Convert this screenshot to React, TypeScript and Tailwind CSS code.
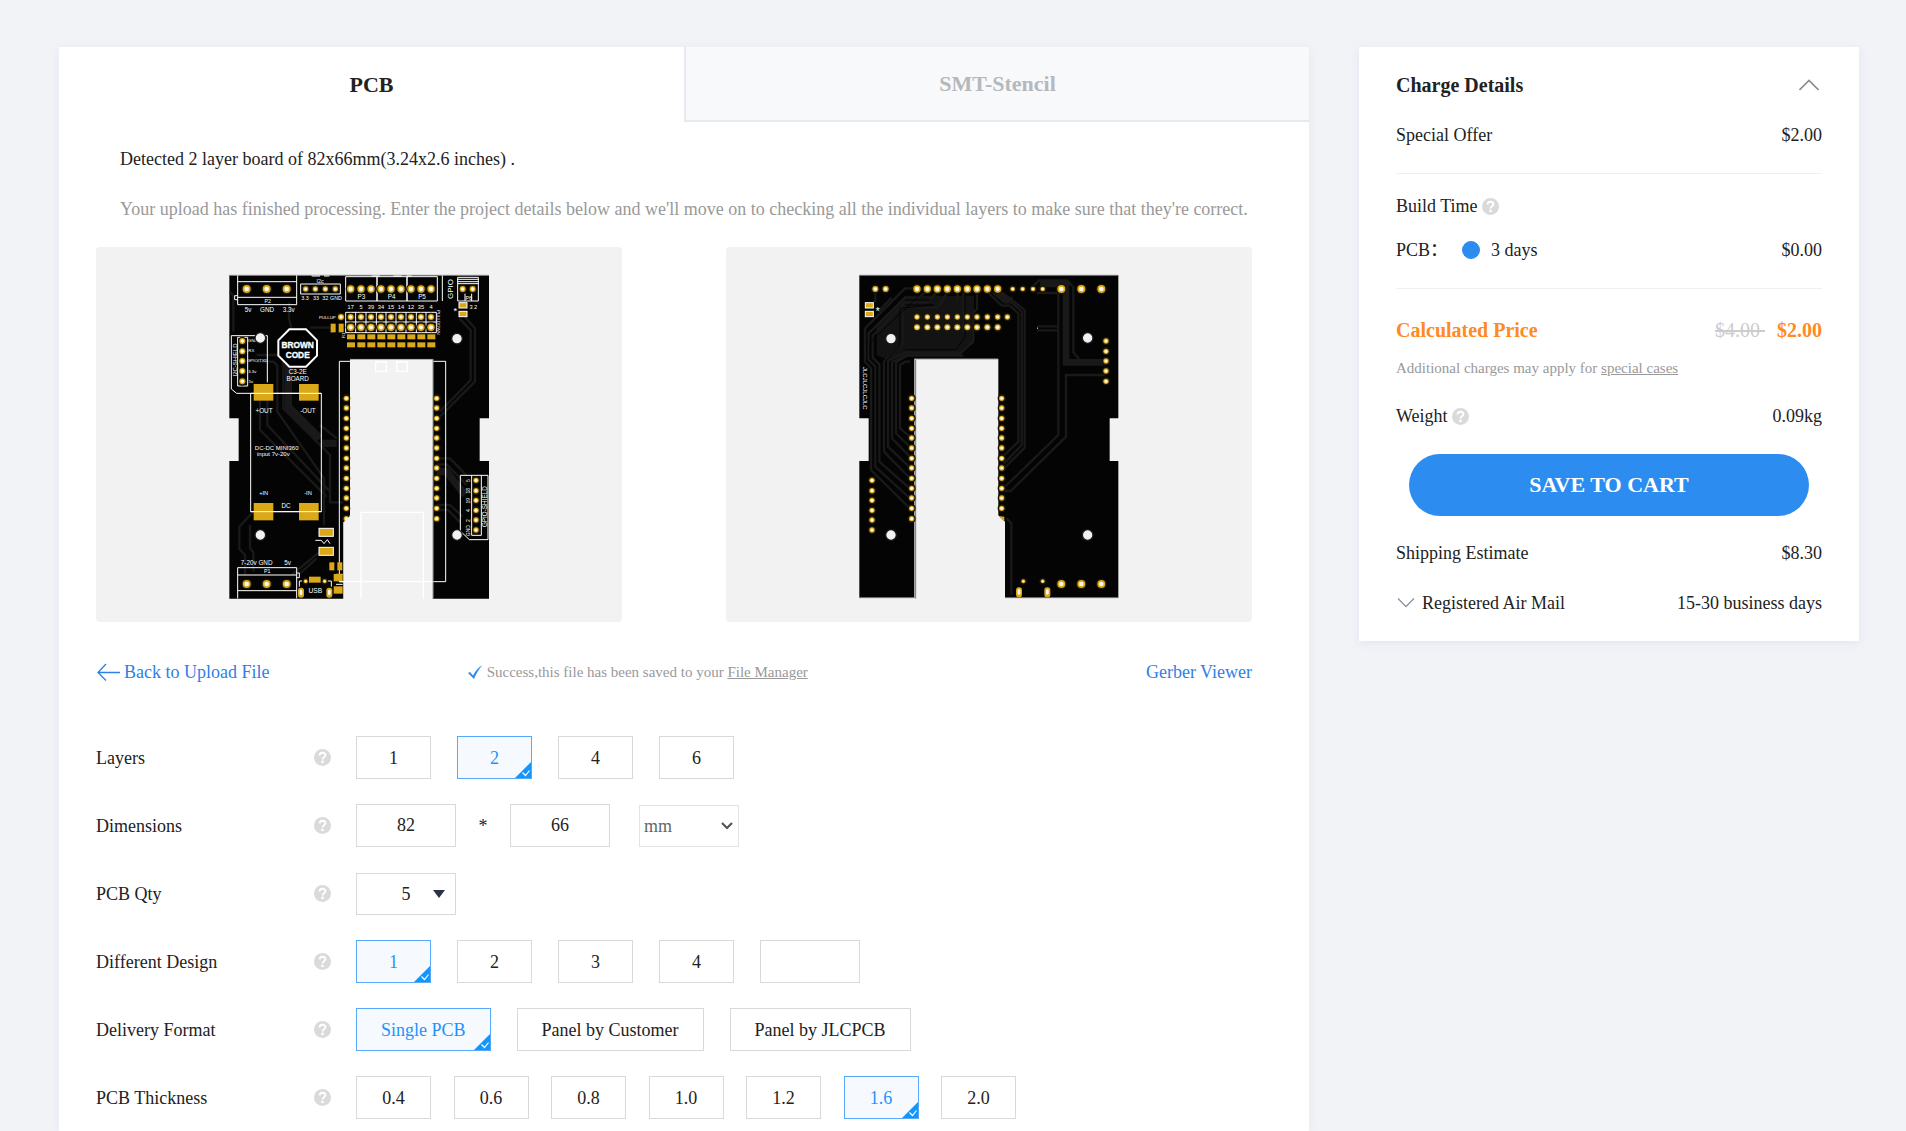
import { useState, type ReactNode } from "react";

const GOLD = "#dba818";
const TRACE = "#191919";
const PAPER = "#f2f2f2";

type Point = [number, number];

/** Plated holes: a gold ring with a light drill hole. */
function Pads({ at, r }: { at: Point[]; r: number }) {
  return (
    <g>
      {at.map(([x, y]) => (
        <g key={`${x}-${y}`}>
          <circle cx={x} cy={y} r={r + 4} fill="#1c1808" />
          <circle cx={x} cy={y} r={r} fill={GOLD} />
          <circle cx={x} cy={y} r={r * 0.58} fill="#fff8e8" />
        </g>
      ))}
    </g>
  );
}

function Holes({ at }: { at: Point[] }) {
  return (
    <g>
      {at.map(([x, y]) => (
        <circle key={`${x}-${y}`} cx={x} cy={y} r={16} fill={PAPER} stroke="#1a1a1a" strokeWidth={4} />
      ))}
    </g>
  );
}

function Blocks({ at, w, h }: { at: Point[]; w: number; h: number }) {
  return (
    <g fill={GOLD}>
      {at.map(([x, y]) => (
        <rect key={`${x}-${y}`} x={x} y={y} width={w} height={h} />
      ))}
    </g>
  );
}

const row = (xs: number[], y: number): Point[] => xs.map((x) => [x, y]);
const column = (x: number, ys: number[]): Point[] => ys.map((y) => [x, y]);

const SIDE_YS = [400, 429, 460, 490, 519, 549, 580, 609, 640, 670, 699, 730];
const HEADER_XS = [392, 423, 453, 483, 513, 543, 573, 603, 633];

function FrontBoard() {
  return (
    <svg viewBox="0 0 840 1020" className="h-[340px] w-[280px]" role="img" aria-label="Board, top side">
      <path
        d="M28 31H807V460H779V588H807V1001H638V283H390V751L370 772V1001H28V588H56V460H28Z"
        fill="#040404"
      />
      <g fill="none" stroke={TRACE} strokeWidth={7} strokeLinejoin="round">
        <path d="M207 112V160L215 195M270 188H335V205M40 200V92L30 80" />
        <path d="M110 270H175L190 285V430L330 570V712H370M110 290H160L172 302V440L312 640V780" />
        <path d="M120 408V495L320 695M142 408V480L330 680M300 480L350 520" />
        <path d="M730 150L765 190V350L660 455M718 160L752 196V345L660 440" />
        <path d="M98 742L58 785V852L75 870V930M90 780V850L100 862V920M300 860L215 930M290 880L240 925" />
        <path d="M650 580H690L740 632M650 598H680L740 660M650 720H690L728 755M650 735H684L720 772" />
      </g>
      <g stroke={TRACE} strokeWidth={22} fill="none">
        <path d="M205 300V425L300 520M305 535H350M650 620H680L735 690" />
      </g>

      <g fill="none" stroke="#fff" strokeWidth={3}>
        <path d="M28 31H807" stroke="#8a8a8a" />
        <path d="M53 31V119H230V31M53 50H230M53 97H230M53 92H44V104H53" />
        <path d="M242 57H361V87H242ZM275 33H300M312 33H328M455 33H480M520 33H545M560 33H575" />
        <path d="M377 35H471V108H377ZM471 35H561V108H471ZM561 35H652V108H561ZM667 31V108" />
        <path d="M713 37H775V108H713ZM713 43H775M713 50H775M713 56H775M735 86V108M755 86V108" />
        <path d="M377 142H649V203H377ZM407 142V203M438 142V203M469 142V203M498 142V203M528 142V203M558 142V203M589 142V203M618 142V203M377 171H649" />
        <path d="M34 212V372L50 385H304V740H92V385M34 212H142V352M53 217H83V363H53Z" />
        <path d="M677 950V289H358V950H677" />
        <path d="M721 631H804V824H748L721 798V631M755 631V811H784V631" />
        <path d="M53 1000V908H230V1000M53 930H230M53 977H230M230 924H238V938H230" />
        <path d="M238 965V948H246M334 965V948H324M348 928H368M348 958H368" />
        <path d="M286 826H304L312 836L322 824L330 836" />
      </g>
      <path d="M638 283V1001" stroke="#777" strokeWidth={3} />
      <path d="M208 193H258L291 226V272L258 305H208L175 272V226Z" fill="#000" stroke="#fff" strokeWidth={6} />

      <g fill="#fff" fontFamily="Liberation Sans, sans-serif" fontSize={19} textAnchor="middle">
        <text x={233} y={249} fontSize={25} fontWeight={700} stroke="#fff">BROWN</text>
        <text x={233} y={278} fontSize={25} fontWeight={700} stroke="#fff">CODE</text>
        <text x={233} y={326}>C3-2E</text>
        <text x={233} y={349}>BOARD</text>
        <text x={84} y={141}>5v</text>
        <text x={141} y={141}>GND</text>
        <text x={206} y={141}>3.3v</text>
        <text x={143} y={113} fontSize={16}>P2</text>
        <text x={300} y={54} fontSize={16}>I2c</text>
        <text x={255} y={104} fontSize={16}>3.3</text>
        <text x={288} y={104} fontSize={16}>33</text>
        <text x={316} y={104} fontSize={16}>32</text>
        <text x={348} y={104} fontSize={16}>GND</text>
        <text x={424} y={101}>P3</text>
        <text x={515} y={101}>P4</text>
        <text x={606} y={101}>P5</text>
        <text x={746} y={106} fontSize={16}>P6</text>
        {["17", "5", "39", "34", "15", "14", "12", "35", "4"].map((t, i) => (
          <text key={t} x={HEADER_XS[i]} y={131} fontSize={17}>{t}</text>
        ))}
        <text x={760} y={131} fontSize={17}>3 2</text>
        <text x={706} y={148} fontSize={28}>*</text>
        <text x={322} y={161} fontSize={13}>PULLUP</text>
        <text x={98} y={232} fontSize={13}>GND</text>
        <text x={94} y={262} fontSize={13}>RX</text>
        <text x={112} y={291} fontSize={13}>GPIO/TXD</text>
        <text x={97} y={323} fontSize={13}>3.3v</text>
        <text x={93} y={353} fontSize={13}>5v</text>
        <text x={132} y={445}>+OUT</text>
        <text x={264} y={445}>-OUT</text>
        <text x={170} y={555} fontSize={18}>DC-DC MINI360</text>
        <text x={160} y={572} fontSize={18}>input 7v-20v</text>
        <text x={131} y={691} fontSize={17}>+IN</text>
        <text x={264} y={691} fontSize={17}>-IN</text>
        <text x={198} y={730}>DC</text>
        <text x={110} y={901} fontSize={19}>7-20v GND</text>
        <text x={203} y={901} fontSize={19}>5v</text>
        <text x={142} y={924} fontSize={16}>P1</text>
        <text x={286} y={983} fontSize={20}>USB</text>
        <text transform="translate(698 72) rotate(-90)" fontSize={24}>GPIO</text>
        <text transform="translate(50 285) rotate(-90)" fontSize={18}>I2C-SHIELD</text>
        <text transform="translate(652 172) rotate(90)" fontSize={13}>PULLDOWN</text>
        <text transform="translate(375 211) rotate(-90)" fontSize={13}>R1</text>
        <text transform="translate(801 725) rotate(-90)" fontSize={19}>GPIO-SHIELD</text>
        {["5", "18", "19", "4", "2", "GND"].map((t, i) => (
          <text key={t} transform={`translate(749 ${647 + i * 30}) rotate(-90)`} fontSize={15}>{t}</text>
        ))}
      </g>

      <Pads at={row([80, 140, 200], 72)} r={12} />
      <Pads at={row([257, 286, 316, 346], 72)} r={8} />
      <Pads at={row(HEADER_XS, 72)} r={11} />
      <Pads at={row([728, 758], 72)} r={9} />
      <Pads at={row([363, ...HEADER_XS], 156)} r={9} />
      <Pads at={row(HEADER_XS, 187)} r={11} />
      <Pads at={column(67, [228, 259, 288, 318, 349])} r={9} />
      <Pads at={column(379, [...SIDE_YS, 761])} r={8} />
      <Pads at={column(650, [...SIDE_YS, 761])} r={8} />
      <Pads at={column(768, [646, 677, 706, 736, 765, 795])} r={8} />
      <Pads at={row([80, 140, 200], 957)} r={12} />
      <Pads at={row([257, 314], 949)} r={6} />
      <Blocks at={HEADER_XS.map((x) => [x - 11, 208])} w={24} h={15} />
      <Blocks at={HEADER_XS.map((x) => [x - 11, 232])} w={24} h={15} />
      <Blocks at={[[101, 357], [237, 357]]} w={59} h={50} />
      <Blocks at={[[101, 714], [237, 714]]} w={59} h={52} />
      <g stroke="#fff" strokeWidth={3}>
        <Blocks at={[[297, 790], [297, 847]]} w={43} h={24} />
        <Blocks at={[[717, 113], [717, 139]]} w={24} h={16} />
      </g>
      <Blocks at={[[332, 176], [356, 176]]} w={15} h={26} />
      <Blocks at={[[328, 892], [352, 892]]} w={15} h={24} />
      <Blocks at={[[341, 927], [341, 964]]} w={27} h={22} />
      <Blocks at={[[267, 935]]} w={35} h={18} />
      <g fill={GOLD}>
        <rect x={234} y={968} width={18} height={30} rx={8} />
        <rect x={319} y={968} width={18} height={30} rx={8} />
      </g>
      <g fill="#fff">
        <rect x={239} y={974} width={8} height={16} rx={4} />
        <rect x={324} y={974} width={8} height={16} rx={4} />
      </g>
      <path d="M92 385H304M92 740H304" stroke="#fff" strokeWidth={3} />
      <Holes at={[[121, 219], [711, 221], [121, 810], [711, 810]]} />
      <path d="M392 283H638V1001H371V772L392 751Z" fill={PAPER} />
      <g fill="none" stroke="#fff" strokeWidth={4}>
        <path d="M467 291V319H499V291ZM530 291V319H562V291ZM358 950H638M423 1001V742H610V1001" />
      </g>
      <path d="M390 283H640V1001" fill="none" stroke="#8a8a8a" strokeWidth={2} />
    </svg>
  );
}

function BackBoard() {
  const xs = [201, 232, 262, 292, 322, 352, 381, 412, 443];
  return (
    <svg viewBox="0 0 840 1020" className="h-[340px] w-[280px]" role="img" aria-label="Board, bottom side">
      <path
        d="M28 31H805V460H779V588H805V998H465V770L445 751V282H193V998H28V588H56V460H28Z"
        fill="#040404"
      />
      <path d="M165 92H372V235L325 270H165L115 285L80 270V180Z" fill="#131313" />
      <g fill="none" stroke={TRACE} strokeWidth={7}>
        <path d="M200 70H165L45 190V290L63 310V615L185 735" />
        <path d="M232 76L205 98H165L56 205V284L76 304V605L185 705" />
        <path d="M262 80L232 112H165L68 212V278L88 298V590L185 675" />
        <path d="M292 82L262 128H165L158 135V235L102 290V560L185 645" />
        <path d="M322 110V70M340 80V200M325 262H170L114 286V545L185 612" />
        <path d="M381 85V132L370 142V228L328 268H176L126 290V520L185 580" />
        <path d="M340 272H170L138 292V505L185 550M180 290H165L150 300V490L185 520" />
        <path d="M412 80L455 122H480L505 145V530L462 572M428 82L462 112H485L515 140V540L462 596" />
        <path d="M443 85H460L524 135V548L462 610" />
        <path d="M552 60L568 46H650L670 66V262L692 287H765M560 84H625V510L465 665M562 184H625M562 196H625" />
        <path d="M765 330H648V515L482 678H462" />
        <path d="M470 760L484 775V990" />
        <path d="M76 85V108L60 120M125 98L85 140" />
      </g>
      <path d="M570 57H648V292H765M648 85V300M443 82L470 105H488" fill="none" stroke={TRACE} strokeWidth={20} />
      <g fill="none" stroke="#040404" strokeWidth={3}>
        <path d="M165 84H215L60 232V280L82 302V595M165 105H240M165 120H250L150 130V240L108 288V550M345 90V215L318 254H165" />
      </g>
      <path d="M28 31H805M197 285V1001M465 998H805M28 998H193" stroke="#777" strokeWidth={3} />
      <path d="M193 282H444" stroke="#999" strokeWidth={3} />
      <Pads at={row([76, 107], 72)} r={9} />
      <Pads at={row(xs, 72)} r={11} />
      <Pads at={row([488, 518, 549, 578], 72)} r={7} />
      <Pads at={row([634, 694, 754], 72)} r={12} />
      <Pads at={row([...xs, 472], 156)} r={8} />
      <Pads at={row(xs, 187)} r={9} />
      <Pads at={column(185, [...SIDE_YS, 761])} r={8} />
      <Pads at={column(455, SIDE_YS)} r={8} />
      <Pads at={column(66, [646, 677, 706, 736, 765, 795])} r={8} />
      <Pads at={column(768, [228, 259, 288, 318, 349])} r={8} />
      <Pads at={row([634, 694, 754], 957)} r={12} />
      <Pads at={row([520, 578], 949)} r={6} />
      <path d="M447 753L463 755L463 770Z" fill={GOLD} />
      <g stroke="#fff" strokeWidth={3}>
        <Blocks at={[[46, 113], [46, 139]]} w={24} h={16} />
      </g>
      <g fill={GOLD}>
        <rect x={498} y={967} width={18} height={30} rx={8} />
        <rect x={583} y={967} width={18} height={30} rx={8} />
      </g>
      <g fill="#fff">
        <rect x={503} y={973} width={8} height={16} rx={4} />
        <rect x={588} y={973} width={8} height={16} rx={4} />
        <rect x={561} y={188} width={3} height={3} />
      </g>
      <g fill="#fff" fontFamily="Liberation Sans, sans-serif" textAnchor="middle">
        <text x={83} y={150} fontSize={30}>*</text>
        <text transform="translate(39 370) rotate(90)" fontSize={18}>JLCJLCJLCJLC</text>
      </g>
      <Holes at={[[123, 221], [713, 219], [123, 810], [713, 810]]} />
    </svg>
  );
}

function HelpIcon() {
  return (
    <svg viewBox="0 0 17 17" className="size-[17px] shrink-0" aria-hidden="true">
      <circle cx="8.5" cy="8.5" r="8.5" fill="#dadada" />
      <path
        d="M5.6 6.6C5.6 4.7 6.8 3.7 8.5 3.7S11.4 4.8 11.4 6.3C11.4 8.2 8.5 8.3 8.5 10.5"
        fill="none"
        stroke="#fff"
        strokeWidth="1.9"
      />
      <circle cx="8.5" cy="12.9" r="1.3" fill="#fff" />
    </svg>
  );
}

function Option({
  name,
  value,
  checked,
  wide = false,
  onSelect,
}: {
  name: string;
  value: string;
  checked: boolean;
  wide?: boolean;
  onSelect: () => void;
}) {
  return (
    <label
      className={`relative flex h-[43px] cursor-pointer items-center justify-center border ${
        wide ? "px-6" : "w-[75px]"
      } ${checked ? "border-[#57a9fb] bg-[#f6faff] text-[#1f93fb]" : "border-[#d9d9d9] bg-white"}`}
    >
      <input type="radio" name={name} value={value} checked={checked} onChange={onSelect} className="sr-only" />
      {value}
      {checked && (
        <svg viewBox="0 0 16 16" className="absolute right-0 bottom-0 size-4" aria-hidden="true">
          <path d="M16 0V16H0Z" fill="#1296fb" />
          <path d="M7.5 10.5L10.5 13.5L14.5 8.5" fill="none" stroke="#fff" strokeWidth="1.2" />
        </svg>
      )}
    </label>
  );
}

function Options({ name, values, initial, wide }: { name: string; values: string[]; initial: string; wide?: boolean }) {
  const [current, setCurrent] = useState(initial);
  return (
    <>
      {values.map((v) => (
        <Option key={v} name={name} value={v} wide={wide} checked={v === current} onSelect={() => setCurrent(v)} />
      ))}
    </>
  );
}

function Field({ label, children }: { label: string; children: ReactNode }) {
  return (
    <div role="group" aria-label={label} className="flex h-[43px] items-center">
      <div className="mr-[25px] flex w-[235px] items-center justify-between">
        <span>{label}</span>
        <HelpIcon />
      </div>
      {children}
    </div>
  );
}

function ChargeRow({ label, children }: { label: ReactNode; children?: ReactNode }) {
  return (
    <div className="flex h-9 items-center justify-between">
      <span className="flex items-center gap-1">{label}</span>
      <span>{children}</span>
    </div>
  );
}

export default function App() {
  const [tab, setTab] = useState("PCB");
  return (
    <div className="flex min-h-screen items-start gap-[50px] bg-[#f1f3f7] pt-[47px] pr-[47px] pl-[59px] font-['Liberation_Serif','Noto_Sans_CJK_SC',serif] text-[18px] leading-6 text-[#222]">
      <main className="min-w-0 flex-1 self-stretch bg-white pb-3 shadow-[0_2px_8px_rgba(200,210,225,0.3)]">
        <div role="tablist" className="grid h-[75px] grid-cols-2 text-[22px] font-bold">
          {["PCB", "SMT-Stencil"].map((t) => (
            <button
              key={t}
              type="button"
              role="tab"
              aria-selected={tab === t}
              onClick={() => setTab(t)}
              className={
                tab === t
                  ? "bg-white"
                  : "border-b-2 border-l-2 border-[#e6e9ed] bg-[#f8f9fb] text-[#b5b8bd]"
              }
            >
              {t}
            </button>
          ))}
        </div>

        <div className="px-[37px]">
          <div className="px-6 pt-[25px]">
            <p>Detected 2 layer board of 82x66mm(3.24x2.6 inches) .</p>
            <p className="pt-[26px] text-[#999]">
              Your upload has finished processing. Enter the project details below and we'll move on to checking all the
              individual layers to make sure that they're correct.
            </p>
          </div>

          <div className="mt-[26px] mr-5 flex justify-between">
            <div className="flex h-[375px] w-[526px] items-center justify-center rounded bg-[#f2f2f2] pt-px pl-[2px]">
              <FrontBoard />
            </div>
            <div className="flex h-[375px] w-[526px] items-center justify-center rounded bg-[#f2f2f2] pt-px pl-[2px]">
              <BackBoard />
            </div>
          </div>

          <div className="mt-[38px] mr-5 flex items-center justify-between text-[#2d80e8]">
            <a href="#upload" className="flex items-center gap-1">
              <svg viewBox="0 0 24 18" className="h-[18px] w-6" fill="none" stroke="currentColor" strokeWidth="1.3" aria-hidden="true">
                <path d="M10 1L2 9.500L10 17.500M2 9.500H24" />
              </svg>
              Back to Upload File
            </a>
            <p className="mr-[140px] flex items-center gap-1 text-[15px] text-[#999]">
              <svg viewBox="0 0 15 15" className="size-[15px]" aria-hidden="true">
                <path d="M0 8L2 7L5 10.500Q8.500 3.500 14.500 0Q9.500 5.500 6 14Z" fill="#2b8ced" />
              </svg>
              <span>
                Success,this file has been saved to your{" "}
                <a href="#files" className="underline">
                  File Manager
                </a>
              </span>
            </p>
            <a href="#viewer">Gerber Viewer</a>
          </div>

          <div className="mt-[52px] flex flex-col gap-[25px]">
            <Field label="Layers">
              <div className="flex gap-[26px]">
                <Options name="layers" values={["1", "2", "4", "6"]} initial="2" />
              </div>
            </Field>
            <Field label="Dimensions">
              <input
                aria-label="Width"
                defaultValue="82"
                className="h-[43px] w-[100px] border border-[#d9d9d9] text-center"
              />
              <span className="w-[54px] text-center">*</span>
              <input
                aria-label="Height"
                defaultValue="66"
                className="h-[43px] w-[100px] border border-[#d9d9d9] text-center"
              />
              <div className="relative ml-[29px]">
                <select
                  aria-label="Unit"
                  className="block h-[42px] w-[100px] appearance-none border border-[#e3e3e3] bg-white pl-1 text-[#666]"
                >
                  <option>mm</option>
                  <option>inch</option>
                </select>
                <svg
                  viewBox="0 0 12 8"
                  className="pointer-events-none absolute top-[17px] right-[6px] h-2 w-3"
                  fill="none"
                  stroke="#555"
                  strokeWidth="2.200"
                  aria-hidden="true"
                >
                  <path d="M1 1L6 6L11 1" />
                </svg>
              </div>
            </Field>
            <Field label="PCB Qty">
              <div className="relative">
                <select
                  aria-label="PCB Qty"
                  className="block h-[42px] w-[100px] appearance-none border border-[#d9d9d9] bg-white text-center [text-align-last:center]"
                >
                  <option>5</option>
                  <option>10</option>
                  <option>15</option>
                </select>
                <svg
                  viewBox="0 0 12 8"
                  className="pointer-events-none absolute top-[17px] right-[11px] h-2 w-3"
                  fill="#2b3148"
                  aria-hidden="true"
                >
                  <path d="M0 0H12L6 8Z" />
                </svg>
              </div>
            </Field>
            <Field label="Different Design">
              <div className="flex gap-[26px]">
                <Options name="design" values={["1", "2", "3", "4"]} initial="1" />
                <input aria-label="Other design count" className="h-[43px] w-[100px] border border-[#d9d9d9] text-center" />
              </div>
            </Field>
            <Field label="Delivery Format">
              <div className="flex gap-[26px]">
                <Options
                  name="format"
                  wide
                  values={["Single PCB", "Panel by Customer", "Panel by JLCPCB"]}
                  initial="Single PCB"
                />
              </div>
            </Field>
            <Field label="PCB Thickness">
              <div className="flex w-[660px] justify-between">
                <Options name="thickness" values={["0.4", "0.6", "0.8", "1.0", "1.2", "1.6", "2.0"]} initial="1.6" />
              </div>
            </Field>
          </div>
        </div>
      </main>

      <aside className="w-[500px] shrink-0 bg-white px-[37px] py-5 shadow-[0_2px_8px_rgba(200,210,225,0.4)]">
        <div className="flex h-9 items-center justify-between">
          <h2 className="text-[20px] font-bold">Charge Details</h2>
          <button type="button" aria-label="Collapse" className="mr-[3px]">
            <svg viewBox="0 0 20 12" className="h-3 w-5" fill="none" stroke="#8c8c8c" strokeWidth="1.600" aria-hidden="true">
              <path d="M0.500 11L10 1.500L19.500 11" />
            </svg>
          </button>
        </div>
        <div className="mt-[14px] border-b border-[#f0f0f0] pb-5">
          <ChargeRow label="Special Offer">$2.00</ChargeRow>
        </div>
        <div className="border-b border-[#f0f0f0] pt-[14px] pb-5">
          <ChargeRow
            label={
              <>
                Build Time <HelpIcon />
              </>
            }
          />
          <div className="mt-2">
            <ChargeRow
              label={
                <>
                  PCB：
                  <label className="ml-[10px] flex items-center gap-[11px]">
                    <input
                      type="radio"
                      name="build"
                      defaultChecked
                      className="size-[18px] appearance-none rounded-full border border-[#2d8cf0] checked:bg-[#2d8cf0]"
                    />
                    3 days
                  </label>
                </>
              }
            >
              $0.00
            </ChargeRow>
          </div>
        </div>
        <div className="mt-[23px] flex h-9 items-center justify-between text-[20px] font-bold text-[#ff8a22]">
          <span>Calculated Price</span>
          <span>
            <del className="mr-3 font-normal whitespace-pre text-[#ccc]">$4.00 </del>
            $2.00
          </span>
        </div>
        <p className="mt-2 text-[15px] text-[#999]">
          Additional charges may apply for{" "}
          <a href="#cases" className="underline">
            special cases
          </a>
        </p>
        <div className="mt-[18px]">
          <ChargeRow
            label={
              <>
                Weight <HelpIcon />
              </>
            }
          >
            0.09kg
          </ChargeRow>
        </div>
        <div className="mt-5 px-[13px]">
          <button type="button" className="h-[62px] w-full rounded-full bg-[#2d8cf0] text-[22px] font-bold text-white">
            SAVE TO CART
          </button>
        </div>
        <div className="mt-[19px]">
          <ChargeRow label="Shipping Estimate">$8.30</ChargeRow>
        </div>
        <div className="mt-[14px]">
          <ChargeRow
            label={
              <>
                <svg viewBox="0 0 20 12" className="mr-[2px] h-3 w-5" fill="none" stroke="#8a93a0" strokeWidth="1.300" aria-hidden="true">
                  <path d="M2 1.500L10 9.500L18 1.500" />
                </svg>
                Registered Air Mail
              </>
            }
          >
            15-30 business days
          </ChargeRow>
        </div>
      </aside>
    </div>
  );
}
